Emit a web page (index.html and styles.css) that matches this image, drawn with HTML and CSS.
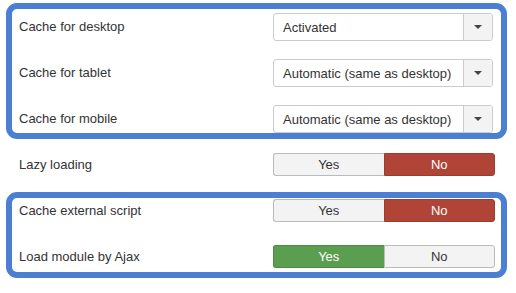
FILE: index.html
```html
<!DOCTYPE html>
<html>
<head>
<meta charset="utf-8">
<link rel="stylesheet" href="styles.css">
</head>
<body>
<div class="page">
  <div class="group group-top">
    <div class="row row-select">
      <div class="label">Cache for desktop</div>
      <div class="select"><span class="select-text">Activated</span><span class="caret-box"><span class="caret"></span></span></div>
    </div>
    <div class="row row-select">
      <div class="label">Cache for tablet</div>
      <div class="select"><span class="select-text">Automatic (same as desktop)</span><span class="caret-box"><span class="caret"></span></span></div>
    </div>
    <div class="row row-select">
      <div class="label">Cache for mobile</div>
      <div class="select"><span class="select-text">Automatic (same as desktop)</span><span class="caret-box"><span class="caret"></span></span></div>
    </div>
  </div>
  <div class="row row-plain">
    <div class="label">Lazy loading</div>
    <div class="toggle"><span class="btn">Yes</span><span class="btn btn-no-active">No</span></div>
  </div>
  <div class="group group-bottom">
    <div class="row">
      <div class="label">Cache external script</div>
      <div class="toggle"><span class="btn">Yes</span><span class="btn btn-no-active">No</span></div>
    </div>
    <div class="row">
      <div class="label">Load module by Ajax</div>
      <div class="toggle"><span class="btn btn-yes-active">Yes</span><span class="btn">No</span></div>
    </div>
  </div>
</div>
</body>
</html>
```
FILE: styles.css
```css
* { box-sizing: border-box; }
html, body { margin: 0; padding: 0; background: #fff; }
body {
  font-family: "Liberation Sans", Arial, sans-serif;
  font-size: 13px;
  color: #333;
}
.page {
  width: 501px;
  margin-left: 6px;
  padding-top: 3px;
}
.group {
  border: 6px solid #4a7fd4;
  border-radius: 11px;
  display: flex;
  flex-direction: column;
}
.group-top {
  padding-top: 4px;
  gap: 18px;
}
.group-bottom {
  margin-top: 16px;
  padding-top: 1px;
  padding-bottom: 4px;
  gap: 23px;
}
.row {
  display: flex;
  align-items: center;
  padding-left: 7px;
}
.row-plain {
  padding-left: 13px;
  margin-top: 14px;
}
.label {
  width: 254px;
  line-height: 16px;
}
.select {
  width: 220px;
  height: 28px;
  border: 1px solid #ccc;
  border-radius: 3px;
  display: flex;
  align-items: stretch;
  background: #fff;
  color: #333;
}
.select-text {
  flex: 1;
  padding-left: 9px;
  display: flex;
  align-items: center;
}
.caret-box {
  width: 29px;
  border-left: 1px solid #ccc;
  background: #f3f3f3;
  border-radius: 0 2px 2px 0;
  display: flex;
  align-items: center;
  justify-content: center;
}
.caret {
  width: 0;
  height: 0;
  border-left: 4px solid transparent;
  border-right: 4px solid transparent;
  border-top: 4px solid #444;
}
.toggle {
  width: 222px;
  height: 23px;
  display: flex;
}
.btn {
  flex: 1;
  display: flex;
  align-items: center;
  justify-content: center;
  background: #f3f3f3;
  border: 1px solid #bbb;
  color: #333;
}
.btn:first-child {
  border-radius: 3px 0 0 3px;
  border-right: none;
}
.btn:last-child {
  border-radius: 0 3px 3px 0;
}
.btn-no-active {
  background: #b04537;
  border-color: #9c3b2f;
  color: #fff;
}
.btn-yes-active {
  background: #5c9e50;
  border-color: #4d8a43;
  color: #fff;
}
```
